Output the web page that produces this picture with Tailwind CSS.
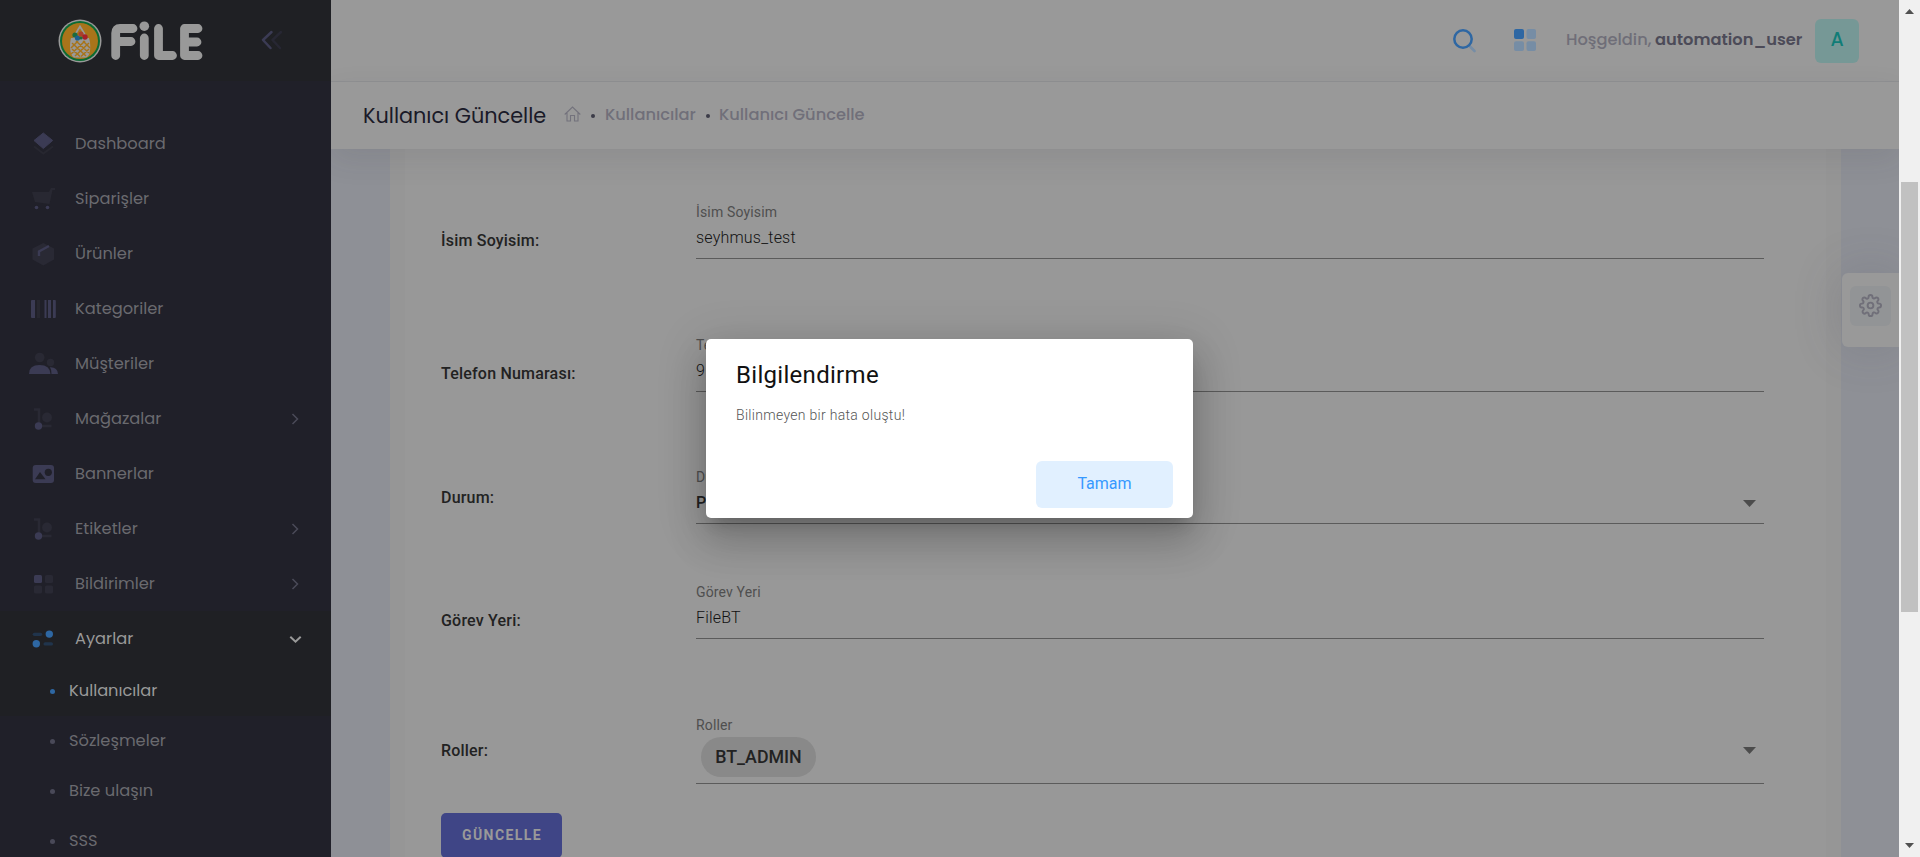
<!DOCTYPE html>
<html lang="tr">
<head>
<meta charset="utf-8">
<title>Kullanıcı Güncelle</title>
<script src="https://cdn.jsdelivr.net/npm/@tailwindcss/browser@4"></script>
</head>
<body class="w-[1920px] h-[857px] overflow-hidden flex bg-[#8e9096] font-[Poppins,Inter,sans-serif]">

<!-- Sidebar -->
<aside class="w-[331px] h-full shrink-0 relative z-20 bg-[#202029] text-[16.25px] text-[#6a6a6f]">
  <div class="h-[81px] bg-[#1f2024] flex items-center pl-[58px]">
    <svg class="w-[44px] h-[44px]" viewBox="0 0 44 44">
      <circle cx="22" cy="22" r="21.500" fill="#999"/><circle cx="22" cy="22" r="20" fill="#0c6b32"/><circle cx="22" cy="22" r="18" fill="#a8741a"/>
      <path d="M16 19C17 14 20 11 22 7.500C24 11 27 14 28 19" fill="none" stroke="#999" stroke-width="1.800"/>
      <path d="M13 19C11 26 12 37 16 38.500H28C33 37 33 25 31 19Z" fill="#999"/>
      <path d="M14 24L28 37M14 30L22 37.500M18 22L31 34M25 22L32 29M31 24L17 37M31 30L23 37.500M27 22L13 35M20 22L13 29" stroke="#a8741a" stroke-width="1.500"/>
      <circle cx="17" cy="16" r="2.600" fill="#1c6b3d"/><circle cx="19.500" cy="19" r="2.600" fill="#1c5f8f"/><circle cx="23" cy="15" r="2.500" fill="#a8402c"/><circle cx="27" cy="18" r="2.700" fill="#a51f2a"/><circle cx="23" cy="19" r="1.600" fill="#1c6b3d"/>
    </svg>
    <svg class="ml-[9px] w-[93px] h-[40px]" viewBox="0 0 93 40" fill="none" stroke="#999" stroke-width="8.800" stroke-linecap="round" stroke-linejoin="round">
      <path d="M22 7.500H9Q4.700 7.500 4.700 12V34.500M6 20.500H20M33.300 17V34.500M47.500 7.500V34.500H61.500M87 7.500H73.500V34.500H87M74 21H86"/><circle cx="33.300" cy="5.200" r="4.800" fill="#999" stroke="none"/>
    </svg>
    <svg class="ml-[56px] mb-[2px] w-[24px] h-[22px]" viewBox="0 0 24 22" fill="none" stroke-width="2.500" stroke-linecap="round" stroke-linejoin="round"><path d="M21 3L12.500 11L20 19" stroke="#272733"/><path d="M11.500 3L3 11L10.500 19" stroke="#3b3b54"/></svg>
  </div>
  <nav class="pt-[35px] [&>a>svg+span]:pt-[2px]">
    <a class="h-[55px] flex items-center pl-[27px] pr-[28px]"><svg class="w-8 h-8 mr-4" viewBox="0 0 32 32"><path d="M16.300 5L25.700 12.500L16.300 20.500L7 12.500Z" fill="#3b3b54" stroke="#3b3b54" stroke-linejoin="round"/><path d="M7 18.500L16.300 25.500L26 18.500" fill="none" stroke="#272730" stroke-width="2"/></svg><span>Dashboard</span></a>
    <a class="h-[55px] flex items-center pl-[27px] pr-[28px]"><svg class="w-8 h-8 mr-4" viewBox="0 0 32 32"><path d="M5 9H22L24 5H28V7H25.500L22.500 21L8 19Z" fill="#282832"/><circle cx="9.500" cy="24.500" r="1.800" fill="#3b3b54"/><circle cx="20.500" cy="24.500" r="1.800" fill="#3b3b54"/></svg><span>Siparişler</span></a>
    <a class="h-[55px] flex items-center pl-[27px] pr-[28px]"><svg class="w-8 h-8 mr-4" viewBox="0 0 32 32"><path d="M16.300 5L27 10.500V21.500L16.300 27.500L5.500 21.500V10.500Z" fill="#292934"/><path d="M22 8L12 13.500V18" fill="none" stroke="#3b3b54" stroke-width="2.400"/></svg><span>Ürünler</span></a>
    <a class="h-[55px] flex items-center pl-[27px] pr-[28px]"><svg class="w-8 h-8 mr-4" viewBox="0 0 32 32" fill="#3b3b54"><path d="M5 7H8V25H5Q4 25 4 24V8Q4 7 5 7M17.500 7H19.500V25H17.500M21 7H24V25H21M26 7H28Q28.800 7 28.800 8V24Q28.800 25 28 25H26"/><path d="M10 7H13V25H10" fill="#272730"/></svg><span>Kategoriler</span></a>
    <a class="h-[55px] flex items-center pl-[27px] pr-[28px]"><svg class="w-8 h-8 mr-4" viewBox="0 0 32 32"><circle cx="12.700" cy="9.500" r="4.800" fill="#292934"/><circle cx="23.500" cy="14.500" r="3.700" fill="#292934"/><path d="M2 26Q2 17 12.500 17Q23 17 23.500 26Z" fill="#3b3b54"/><path d="M24.500 26Q24.500 21.500 23 19.300Q30.500 19 31 26Z" fill="#3b3b54"/></svg><span>Müşteriler</span></a>
    <a class="h-[55px] flex items-center pl-[27px] pr-[28px]"><svg class="w-8 h-8 mr-4" viewBox="0 0 32 32"><path d="M7 6.500H12V21M15 23H24.500" stroke="#292934" stroke-width="2.500" fill="none"/><circle cx="20" cy="14.500" r="4.900" fill="#292934"/><circle cx="11.500" cy="23" r="3.700" fill="#3b3b54"/></svg><span>Mağazalar</span><svg class="ml-auto w-4 h-4" viewBox="0 0 16 16" fill="none" stroke="#4a4a58" stroke-width="1.500"><path d="M5.500 3L10.500 8L5.500 13"/></svg></a>
    <a class="h-[55px] flex items-center pl-[27px] pr-[28px]"><svg class="w-8 h-8 mr-4" viewBox="0 0 32 32"><rect x="5.700" y="7" width="21.300" height="18" rx="3" fill="#3b3b54"/><circle cx="21.300" cy="14.300" r="3.600" fill="#202029"/><path d="M8 21.300L13 14L18.500 21.300Z" fill="#202029"/></svg><span>Bannerlar</span></a>
    <a class="h-[55px] flex items-center pl-[27px] pr-[28px]"><svg class="w-8 h-8 mr-4" viewBox="0 0 32 32"><path d="M7 6.500H12V21M15 23H24.500" stroke="#292934" stroke-width="2.500" fill="none"/><circle cx="20" cy="14.500" r="4.900" fill="#292934"/><circle cx="11.500" cy="23" r="3.700" fill="#3b3b54"/></svg><span>Etiketler</span><svg class="ml-auto w-4 h-4" viewBox="0 0 16 16" fill="none" stroke="#4a4a58" stroke-width="1.500"><path d="M5.500 3L10.500 8L5.500 13"/></svg></a>
    <a class="h-[55px] flex items-center pl-[27px] pr-[28px]"><svg class="w-8 h-8 mr-4" viewBox="0 0 32 32" fill="#292934"><rect x="7" y="7" width="8" height="8" rx="1.500" fill="#3b3b54"/><rect x="18" y="7" width="8" height="8" rx="1.500"/><rect x="7" y="17.500" width="8" height="8" rx="1.500"/><rect x="18" y="17.500" width="8" height="8" rx="1.500"/></svg><span>Bildirimler</span><svg class="ml-auto w-4 h-4" viewBox="0 0 16 16" fill="none" stroke="#4a4a58" stroke-width="1.500"><path d="M5.500 3L10.500 8L5.500 13"/></svg></a>
    <a class="h-[55px] flex items-center pl-[27px] pr-[28px] bg-[#1f2024] text-[#999]"><svg class="w-8 h-8 mr-4" viewBox="0 0 32 32"><rect x="5.700" y="9.700" width="9.500" height="3.200" rx="1.600" fill="#20344c"/><rect x="16.500" y="19.300" width="9.500" height="3.200" rx="1.600" fill="#20344c"/><circle cx="22.300" cy="11.100" r="3.700" fill="#2e67a3"/><circle cx="9.300" cy="20.700" r="3.700" fill="#2e67a3"/></svg><span>Ayarlar</span><svg class="ml-auto w-4 h-4" viewBox="0 0 16 16" fill="none" stroke="#999" stroke-width="2"><path d="M3.300 5.700L8.500 10.700L13.700 5.700"/></svg></a>
    <a class="h-[50px] flex items-center gap-[14px] pl-[50px] bg-[#1f2024] text-[#999]"><i class="w-[5px] h-[5px] rounded-full bg-[#2e67a3]"></i><span>Kullanıcılar</span></a>
    <a class="h-[50px] flex items-center gap-[14px] pl-[50px]"><i class="w-[5px] h-[5px] rounded-full bg-[#494958]"></i><span>Sözleşmeler</span></a>
    <a class="h-[50px] flex items-center gap-[14px] pl-[50px]"><i class="w-[5px] h-[5px] rounded-full bg-[#494958]"></i><span>Bize ulaşın</span></a>
    <a class="h-[50px] flex items-center gap-[14px] pl-[50px]"><i class="w-[5px] h-[5px] rounded-full bg-[#494958]"></i><span>SSS</span></a>
  </nav>
</aside>

<main class="w-[1568px] h-full shrink-0 flex flex-col">
  <!-- Top bar -->
  <header class="h-[82px] shrink-0 bg-[#999] border-b border-[#8f9092] flex items-center justify-end pr-10 text-[16.25px]">
    <svg class="w-[24px] h-[24px] mr-[38px]" viewBox="0 0 24 24" fill="none"><path d="M18 17.500L22.500 22" stroke="#768da5" stroke-width="2.600" stroke-linecap="round"/><circle cx="11" cy="10" r="8.700" stroke="#2e67a3" stroke-width="2.500"/></svg>
    <svg class="w-[22px] h-[22px] mr-[30px] mb-px" viewBox="0 0 22 22" fill="#768da5"><rect width="10" height="10" rx="2" fill="#2e67a3"/><rect x="12.500" width="9.500" height="10" rx="2"/><rect y="12.300" width="10" height="9.700" rx="2"/><rect x="12.500" y="12.300" width="9.500" height="9.700" rx="2"/></svg>
    <span class="text-[#6f6e78] font-medium w-[89px] mb-px whitespace-nowrap">Hoşgeldin,</span>
    <span class="text-[#4c4b58] font-semibold w-[160px] mb-px whitespace-nowrap">automation_user</span>
    <span class="size-11 rounded-md bg-[#769896] text-[#107d77] font-medium text-[19px] flex items-center justify-center">A</span>
  </header>
  <!-- Title and breadcrumb -->
  <div class="h-[67px] shrink-0 bg-[#999] flex items-center pl-8 relative z-10 shadow-[0_10px_30px_rgba(50,50,60,0.10)]">
    <h1 class="text-[20.800px] font-normal text-[#1a1a28] w-[201px] whitespace-nowrap">Kullanıcı Güncelle</h1>
    <svg class="w-[17px] h-[16px] mb-[3px]" viewBox="0 0 17 16" fill="none" stroke="#73727c" stroke-width="1.100"><path d="M.700 8.500L8.500 1L16.300 8.500M3 6.700V15H6.500V9.500H10.500V15H14V6.700"/></svg>
    <i class="ml-[10px] size-[4px] rounded-full bg-[#3c3c48]"></i>
    <span class="ml-[10px] w-[91px] whitespace-nowrap text-[16.250px] font-medium text-[#706f79]">Kullanıcılar</span>
    <i class="ml-[10px] size-[4px] rounded-full bg-[#3c3c48]"></i>
    <span class="ml-[9px] whitespace-nowrap text-[16.250px] font-medium text-[#706f79]">Kullanıcı Güncelle</span>
  </div>
  <!-- Form -->
  <section class="grow mx-[59px] mr-[58px] bg-[#989898] border-x-[15px] border-[#969696] font-[Roboto,sans-serif] text-[#222] pl-[36px] pr-[62px] overflow-hidden">
    <div class="h-[110px] flex"><div class="w-[255px] pt-[82px] text-[16px] tracking-[.2px] leading-[20px] font-medium">İsim Soyisim:</div><div class="grow border-b border-[#5b5b5b] pt-[53px]"><div class="text-[14px] leading-[20px] tracking-[.150px] text-[#4f4f4f]">İsim Soyisim</div><div class="text-[16px] leading-[20px] mt-[6px] font-light tracking-[.2px] text-[#111]">seyhmus_test</div></div></div>
    <div class="h-[133px] flex"><div class="w-[255px] pt-[105px] text-[16px] tracking-[.2px] leading-[20px] font-medium">Telefon Numarası:</div><div class="grow border-b border-[#5b5b5b] pt-[76px]"><div class="text-[14px] leading-[20px] tracking-[.150px] text-[#4f4f4f]">Telefon Numarası</div><div class="text-[16px] leading-[20px] mt-[6px] font-light tracking-[.2px] text-[#111]">9</div></div></div>
    <div class="h-[132px] flex"><div class="w-[255px] pt-[96px] text-[16px] tracking-[.2px] leading-[20px] font-medium">Durum:</div><div class="grow border-b border-[#5b5b5b] pt-[75px]"><div class="text-[14px] leading-[20px] tracking-[.150px] text-[#4f4f4f]">Durum</div><div class="text-[16px] leading-[20px] mt-[6px] font-medium flex items-center justify-between pr-2"><span>P</span><svg class="w-[13px] h-[7px]" viewBox="0 0 13 7"><path d="M0 0H13L6.500 7Z" fill="#4c4c4c"/></svg></div></div></div>
    <div class="h-[115px] flex"><div class="w-[255px] pt-[87px] text-[16px] tracking-[.2px] leading-[20px] font-medium">Görev Yeri:</div><div class="grow border-b border-[#5b5b5b] pt-[58px]"><div class="text-[14px] leading-[20px] tracking-[.150px] text-[#4f4f4f]">Görev Yeri</div><div class="text-[16px] leading-[20px] mt-[6px] font-light tracking-[.2px] text-[#111]">FileBT</div></div></div>
    <div class="h-[145px] flex"><div class="w-[255px] pt-[102px] text-[16px] tracking-[.2px] leading-[20px] font-medium">Roller:</div><div class="grow border-b border-[#5b5b5b] pt-[76px]"><div class="text-[14px] leading-[20px] tracking-[.150px] text-[#4f4f4f]">Roller</div><div class="mt-[2px] pl-[5px] pr-2 flex justify-between"><span class="w-[115px] h-10 rounded-full bg-[#898989] flex items-center justify-center text-[17.800px] font-medium">BT_ADMIN</span><svg class="w-[13px] h-[7px] mt-[10px]" viewBox="0 0 13 7"><path d="M0 0H13L6.500 7Z" fill="#4c4c4c"/></svg></div></div></div>
    <button class="mt-[29px] w-[121px] h-[45px] rounded-[5px] bg-[#3f4586] text-[#999] text-[14px] font-bold tracking-[1.400px] pl-[1px]">GÜNCELLE</button>
  </section>
</main>

<!-- Page scrollbar -->
<div class="w-[21px] h-full shrink-0 bg-[#f0f0f0] flex flex-col items-center relative z-30">
  <svg class="mt-[9px] w-[9px] h-[5px]" viewBox="0 0 9 5"><path d="M0 5H9L4.500 0Z" fill="#505050"/></svg>
  <div class="mt-[168px] w-[17px] h-[430px] bg-[#c1c1c1]"></div>
  <svg class="mt-auto mb-[9px] w-[9px] h-[5px]" viewBox="0 0 9 5"><path d="M0 0H9L4.500 5Z" fill="#505050"/></svg>
</div>

<!-- Settings tab -->
<div class="absolute left-[1842px] top-[273px] w-[57px] h-[74px] rounded-l-md bg-[#999] pl-2 pt-[13px] z-20 shadow-[0_0_50px_rgba(70,70,90,0.2)] [clip-path:inset(-60px_0_-60px_-60px)]">
  <div class="w-[41px] h-[40px] rounded-md bg-[#929496] flex items-center justify-center pb-[2px]"><svg class="w-[23px] h-[23px]" viewBox="0 0 24 24" fill="none" stroke="#706f79" stroke-width="2"><circle cx="12" cy="12" r="3"/><path d="M19.400 15a1.650 1.650 0 0 0 .33 1.820l.06.06a2 2 0 1 1-2.830 2.830l-.06-.06a1.650 1.650 0 0 0-2.800 1.170V21a2 2 0 0 1-4 0v-.09a1.650 1.650 0 0 0-2.900-1.100l-.06.06a2 2 0 1 1-2.830-2.830l.06-.06A1.650 1.650 0 0 0 3.090 14H3a2 2 0 0 1 0-4h.09a1.650 1.650 0 0 0 1.100-2.900l-.06-.06a2 2 0 1 1 2.830-2.830l.06.06A1.650 1.650 0 0 0 10 3.090V3a2 2 0 0 1 4 0v.09a1.650 1.650 0 0 0 2.800 1.170l.06-.06a2 2 0 1 1 2.830 2.830l-.06.06A1.650 1.650 0 0 0 20.910 10H21a2 2 0 0 1 0 4h-.09a1.650 1.650 0 0 0-1.510 1z"/></svg></div>
</div>

<!-- Dialog -->
<div role="dialog" class="absolute left-[706px] top-[339px] w-[487px] h-[179px] z-40 bg-white rounded-[5px] pl-[30px] pr-5 pt-[20px] pb-[10px] flex flex-col font-[Roboto,sans-serif] shadow-[0_11px_15px_-7px_rgba(0,0,0,0.2),0_24px_38px_3px_rgba(0,0,0,0.14),0_9px_46px_8px_rgba(0,0,0,0.12)]">
  <h2 class="text-[24px] leading-8 font-normal tracking-[.3px] text-[#111]">Bilgilendirme</h2>
  <p class="mt-[14px] text-[14px] leading-5 font-light tracking-[.300px] text-[#555]">Bilinmeyen bir hata oluştu!</p>
  <button class="mt-auto ml-auto w-[137px] h-[47px] rounded-md bg-[#e1f0ff] text-[#3699ff] text-[16px] pb-[2px]">Tamam</button>
</div>
</body>
</html>
